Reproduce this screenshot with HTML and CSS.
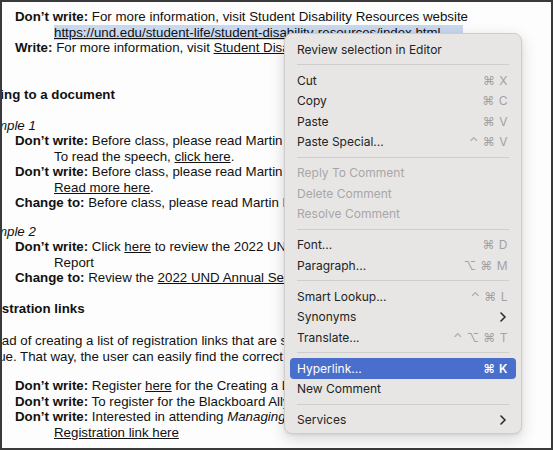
FILE: index.html
```html
<!DOCTYPE html>
<html lang="en">
<head>
<meta charset="utf-8">
<title>Context menu</title>
<link rel="stylesheet" href="styles.css">
</head>
<body>
<div class="frame">
  <div class="doc">
    <div class="blk top">
      <div class="ln item"><b>Don’t write:</b> For more information, visit Student Disability Resources website</div>
      <div class="ln cont"><span class="sel"><u>https://und.edu/student-life/student-disability-resources/index.html</u></span></div>
      <div class="ln item"><b>Write:</b> For more information, visit <u>Student Disability Resources</u>.</div>
    </div>
    <div class="ln heading h1">Linking to a document</div>
    <div class="ln example ex1">Example 1</div>
    <div class="blk">
      <div class="ln item"><b>Don’t write:</b> Before class, please read Martin Luther King Jr.’s speech.</div>
      <div class="ln cont">To read the speech, <u>click here</u>.</div>
      <div class="ln item"><b>Don’t write:</b> Before class, please read Martin Luther King Jr.’s speech.</div>
      <div class="ln cont"><u>Read more here</u>.</div>
      <div class="ln item"><b>Change to:</b> Before class, please read Martin Luther King Jr.’s speech.</div>
    </div>
    <div class="ln example ex2">Example 2</div>
    <div class="blk">
      <div class="ln item"><b>Don’t write:</b> Click <u>here</u> to review the 2022 UND Annual Security</div>
      <div class="ln cont">Report</div>
      <div class="ln item"><b>Change to:</b> Review the <u>2022 UND Annual Security Report</u></div>
    </div>
    <div class="ln heading h2">Registration links</div>
    <div class="blk para">
      <div class="ln">Instead of creating a list of registration links that are specific to each</div>
      <div class="ln">unique. That way, the user can easily find the correct link.</div>
    </div>
    <div class="blk list">
      <div class="ln item"><b>Don’t write:</b> Register <u>here</u> for the Creating a Logo workshop.</div>
      <div class="ln item"><b>Don’t write:</b> To register for the Blackboard Ally workshop.</div>
      <div class="ln item"><b>Don’t write:</b> Interested in attending <i>Managing Your Course</i>? Register:</div>
      <div class="ln cont"><u>Registration link here</u></div>
    </div>
  </div>

  <div class="menu">
    <div class="mi">Review selection in Editor</div>
    <div class="sep"></div>
    <div class="mi">Cut<span class="sc">⌘ X</span></div>
    <div class="mi">Copy<span class="sc">⌘ C</span></div>
    <div class="mi">Paste<span class="sc">⌘ V</span></div>
    <div class="mi">Paste Special...<span class="sc">⌃ ⌘ V</span></div>
    <div class="sep"></div>
    <div class="mi off">Reply To Comment</div>
    <div class="mi off">Delete Comment</div>
    <div class="mi off">Resolve Comment</div>
    <div class="sep"></div>
    <div class="mi">Font...<span class="sc">⌘ D</span></div>
    <div class="mi">Paragraph...<span class="sc">⌥ ⌘ M</span></div>
    <div class="sep"></div>
    <div class="mi">Smart Lookup...<span class="sc">⌃ ⌘ L</span></div>
    <div class="mi">Synonyms<svg class="chev" width="6" height="10" viewBox="0 0 6 10"><polyline points="1,1 5,5 1,9" fill="none" stroke="#2a2a2a" stroke-width="1.6" stroke-linecap="round" stroke-linejoin="round"/></svg></div>
    <div class="mi">Translate...<span class="sc">⌃ ⌥ ⌘ T</span></div>
    <div class="sep"></div>
    <div class="mi active">Hyperlink...<span class="sc">⌘ K</span></div>
    <div class="mi">New Comment</div>
    <div class="sep"></div>
    <div class="mi">Services<svg class="chev" width="6" height="10" viewBox="0 0 6 10"><polyline points="1,1 5,5 1,9" fill="none" stroke="#2a2a2a" stroke-width="1.6" stroke-linecap="round" stroke-linejoin="round"/></svg></div>
  </div>
</div>
</body>
</html>
```

FILE: styles.css
```css
html, body {
  margin: 0;
  padding: 0;
  background: #ffffff;
}

.frame {
  position: relative;
  width: 553px;
  height: 450px;
  box-sizing: border-box;
  border: 2px solid #3a3a3a;
  background: #fdfdfd;
  overflow: hidden;
}

.doc {
  margin-left: -29px;
  padding-top: 7.25px;
  font-family: "Liberation Sans", Arial, sans-serif;
  font-size: 13.3px;
  color: #111111;
}

.ln {
  height: 15.5px;
  line-height: 15.5px;
  white-space: nowrap;
}

.item {
  padding-left: 42px;
}

.cont {
  padding-left: 81px;
}

.sel {
  background: #c8d8ee;
  padding-right: 22px;
}

.heading {
  font-weight: bold;
}

.example {
  font-style: italic;
}

.h1 { margin-top: 31px; }
.ex1 { margin-top: 15.5px; }
.ex2 { margin-top: 13px; }
.h2 { margin-top: 15.5px; }
.para { margin-top: 16.5px; }
.list { margin-top: 14px; }

.menu {
  position: absolute;
  left: 282px;
  top: 31px;
  width: 238px;
  box-sizing: border-box;
  padding: 5px 5px 3px;
  background: #e7e6e5;
  border: 1px solid #cfcecc;
  border-radius: 8px;
  box-shadow: 0 5px 16px rgba(0, 0, 0, 0.16), 0 1px 3px rgba(0, 0, 0, 0.08);
  font-family: "Inter", "Noto Sans", sans-serif;
  font-size: 12px;
  color: #232323;
}

.mi {
  height: 20.5px;
  display: flex;
  align-items: center;
  justify-content: space-between;
  padding: 0 8px 0 7px;
  border-radius: 4px;
  white-space: nowrap;
}

.mi.off {
  color: #a8a7a6;
}

.mi.active {
  background: #4a6ecb;
  color: #ffffff;
}

.sc {
  font-family: "Inter", "DejaVu Sans", sans-serif;
  color: #a3a2a1;
  font-size: 12px;
  letter-spacing: 0.5px;
}

.mi.active .sc {
  color: #ffffff;
  font-weight: 600;
}

.chev {
  margin-right: 2px;
}

.sep {
  height: 1px;
  margin: 4.75px 7px;
  background: #cfcecd;
}
```
